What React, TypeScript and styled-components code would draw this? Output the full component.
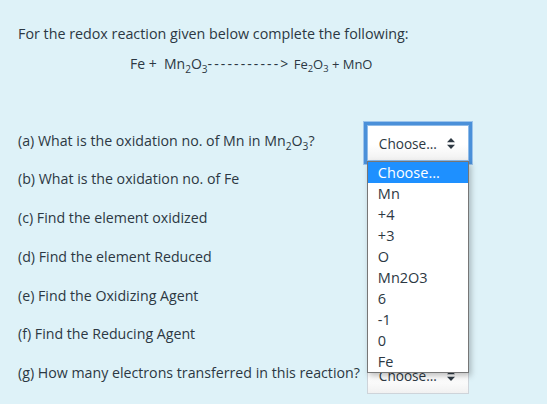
import React from 'react'
import styled, { createGlobalStyle } from 'styled-components'

const GlobalStyle = createGlobalStyle`
  html, body {
    margin: 0;
    padding: 0;
    background: #def2f8;
  }
  body {
    font-family: 'Open Sans', 'Noto Sans', sans-serif;
    color: #2c3843;
  }
`

const Formulation = styled.div`
  background-color: #def2f8;
  width: 547px;
  height: 404px;
  padding: 24px 0 0 18px;
  box-sizing: border-box;
  position: relative;
  overflow: hidden;
`

const Intro = styled.p`
  font-size: 14.3px;
  line-height: 20px;
  margin: 0;
`

const Reaction = styled.p`
  font-size: 14px;
  line-height: 20px;
  margin: 10px 0 0 112px;
  white-space: pre;
`

const Dashes = styled.span`
  letter-spacing: 2.1px;
`

const Products = styled.span`
  font-size: 13px;
  margin-left: 2px;
`

const Sub = styled.sub`
  font-size: 0.72em;
  vertical-align: -0.35em;
  line-height: 0;
`

const QuestionGrid = styled.div`
  display: grid;
  grid-template-columns: max-content max-content;
  grid-auto-rows: 36px;
  column-gap: 7px;
  row-gap: 2.8px;
  margin-top: 51px;
`

const Label = styled.div`
  font-size: 14.2px;
  line-height: 20px;
  padding-top: 5.5px;
`

const SelectWrap = styled.div`
  position: relative;
`

const Select = styled.div<{ $focused?: boolean }>`
  width: 102px;
  height: 36px;
  box-sizing: border-box;
  border: 1px solid ${(p) => (p.$focused ? '#8fbbe8' : '#ced4da')};
  background: linear-gradient(to bottom, #ffffff 55%, #f1f1f1 100%);
  display: flex;
  align-items: center;
  justify-content: space-between;
  padding: 0 13px 0 11px;
  font-size: 13.6px;
  box-shadow: ${(p) => (p.$focused ? '0 0 0 3px #4a90d9, 0 0 0 4px #9cc4ec' : 'none')};
`

const Dropdown = styled.ul`
  position: absolute;
  top: 36px;
  left: 0;
  width: 102px;
  box-sizing: border-box;
  margin: 0;
  padding: 0;
  list-style: none;
  background: #ffffff;
  border: 1px solid #767676;
  box-shadow: 2px 3px 6px rgba(0, 0, 0, 0.25);
  z-index: 10;
`

const Option = styled.li<{ $active?: boolean }>`
  height: 21px;
  line-height: 21px;
  padding-left: 10px;
  font-size: 14.5px;
  background: ${(p) => (p.$active ? '#1e90ff' : 'transparent')};
  color: ${(p) => (p.$active ? '#ffffff' : '#2c3843')};
`

const Arrows = () => (
  <svg width="8" height="11" viewBox="0 0 8 11">
    <path d="M4 0 L8 4.3 L0 4.3 Z" fill="#2f3a44" />
    <path d="M4 11 L8 6.7 L0 6.7 Z" fill="#2f3a44" />
  </svg>
)

const options = ['Choose...', 'Mn', '+4', '+3', 'O', 'Mn2O3', '6', '-1', '0', 'Fe']

const questions: React.ReactNode[] = [
  <>
    (a) What is the oxidation no. of Mn in Mn<Sub>2</Sub>O<Sub>3</Sub>?
  </>,
  '(b) What is the oxidation no. of Fe',
  '(c) Find the element oxidized',
  '(d) Find the element Reduced',
  '(e) Find the Oxidizing Agent',
  '(f)  Find the Reducing Agent',
  '(g) How many electrons transferred in this reaction?'
]

export default function App() {
  return (
    <>
      <GlobalStyle />
      <Formulation>
        <Intro>For the redox reaction given below complete the following:</Intro>
        <Reaction>
          Fe +  Mn<Sub>2</Sub>O<Sub>3</Sub>
          <Dashes>-----------</Dashes>&gt;
          <Products>
            {' '}Fe<Sub>2</Sub>O<Sub>3</Sub> + MnO
          </Products>
        </Reaction>
        <QuestionGrid>
          {questions.map((q, i) => (
            <React.Fragment key={i}>
              <Label>{q}</Label>
              <SelectWrap>
                <Select $focused={i === 0}>
                  <span>Choose...</span>
                  <Arrows />
                </Select>
                {i === 0 && (
                  <Dropdown>
                    {options.map((o, j) => (
                      <Option key={o} $active={j === 0}>
                        {o}
                      </Option>
                    ))}
                  </Dropdown>
                )}
              </SelectWrap>
            </React.Fragment>
          ))}
        </QuestionGrid>
      </Formulation>
    </>
  )
}
